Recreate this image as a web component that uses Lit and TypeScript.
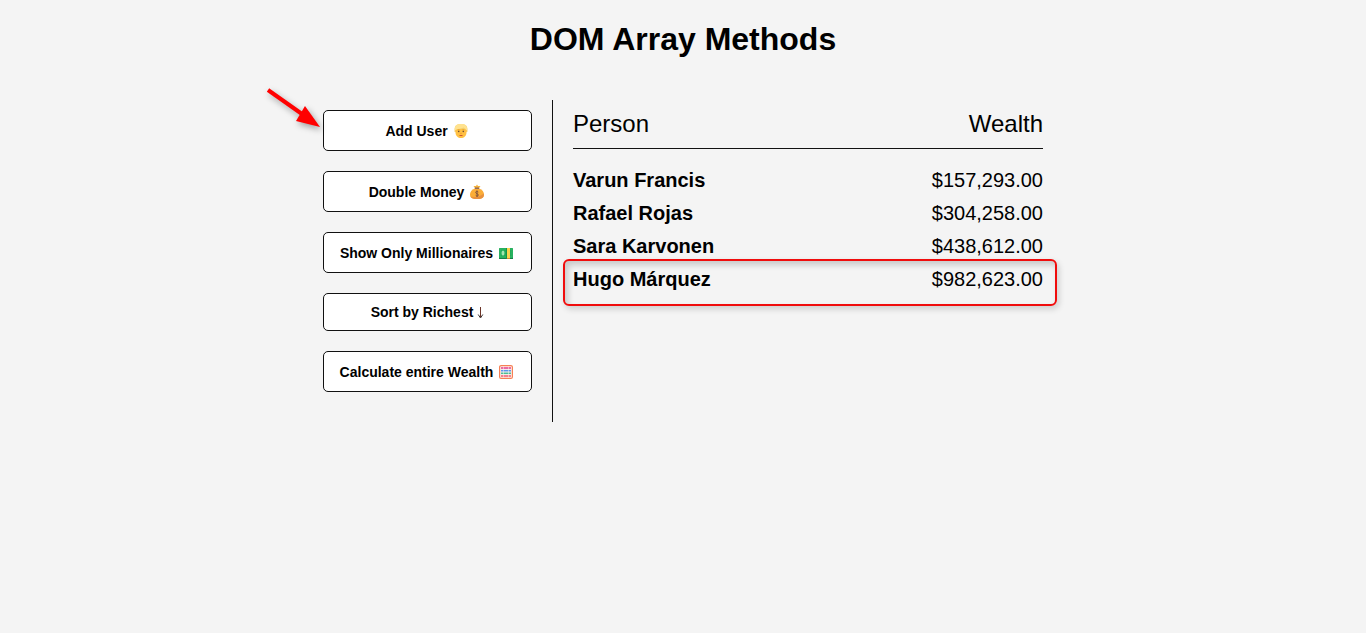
import { LitElement, html, css, svg } from "lit";
import { customElement } from "lit/decorators.js";

interface Person {
  name: string;
  money: number;
  isNew?: boolean;
}

const icons = {
  user: svg`
    <path d="M2.600 9C2 3 4 1 9 1S16 3 15.400 9Z" fill="#f3cf6e"/>
    <path d="M3.500 6H14.500V9.500C14.500 13 12 15 9 15S3.500 13 3.500 9.500Z" fill="#ffc043"/>
    <path d="M3 7C2.500 2 5 1 9 1S15.500 2 15 7L14 7C13.500 5.500 12.500 5 11.500 4.500 9 6 6 5.500 4.500 6.500L4 7Z" fill="#ffe28f"/>
    <path d="M5.800 7h1.800M10.400 7h1.800" stroke="#c98a2c" stroke-width=".7"/>
    <circle cx="6.700" cy="8.500" r=".8" fill="#6a4a35"/><circle cx="11.300" cy="8.500" r=".8" fill="#6a4a35"/>
    <path d="M8.400 10.400h1.200" stroke="#f08f1e" stroke-width=".8"/><path d="M7.500 12.500h3" stroke="#c8492c" stroke-width=".9"/>`,
  money: svg`
    <path d="M7 4 5.500 2 8 2 9 .5 10 2 12.500 2 11 4Z" fill="#f4b13c"/>
    <path d="M7 4.500C3.500 5.500 2 8 2 10.500 2 14 4.500 15 9 15S16 14 16 10.500C16 8 14.500 5.500 11 4.500Z" fill="#fbad38"/>
    <path d="M2.500 12.500C6 13.500 12 13 15.800 9.500V12C15 14.500 12.500 15 9 15S3.500 14.600 2.500 12.500Z" fill="#e8913f"/>
    <path d="M6.800 4.200h4.400" stroke="#78514a" stroke-width="1.200"/>
    <path d="M10.300 8C9 7 7.700 7.200 7.700 8.500S10.300 9.500 10.300 11 8.500 12.200 7.700 11.300M9 6.500v6.500" fill="none" stroke="#80523c" stroke-width="1"/>`,
  cash: svg`
    <rect x="2" y="3" width="14" height="11" rx=".6" fill="#1faa58"/>
    <path d="M2 13h14v1H2Z" fill="#147c49"/>
    <rect x="3" y="4" width="12" height="8" fill="none" stroke="#3fc172" stroke-width=".6"/>
    <ellipse cx="6" cy="8" rx="1.500" ry="2.500" fill="#a2e6af"/>
    <path d="M9 3h4v11H9Z" fill="#14934a"/><path d="M10 3h3v10h-3Z" fill="#f8d34c"/><path d="M10 13h3v1h-3Z" fill="#d88a36"/>`,
  abacus: svg`
    <rect x="2.600" y="1.600" width="12.800" height="12.800" rx="1.500" fill="#fff3ee" stroke="#f68055" stroke-width="1.200"/>
    <path d="M4 4h10" stroke="#ea6aa4" stroke-width="2"/>
    <path d="M4 6.700h10" stroke="#5b97ec" stroke-width="1.600"/>
    <path d="M4 9.300h10" stroke="#4cbd98" stroke-width="1.600"/>
    <path d="M4 12h10" stroke="#f0657a" stroke-width="1.600"/>
    <path d="M6.500 2.500v11M11.500 2.500v11" stroke="#fff3ee" stroke-width=".7" opacity=".7"/>`,
};

const people: Person[] = [
  { name: "Varun Francis", money: 157293 },
  { name: "Rafael Rojas", money: 304258 },
  { name: "Sara Karvonen", money: 438612 },
  { name: "Hugo Márquez", money: 982623, isNew: true },
];

const formatMoney = (value: number) =>
  value.toLocaleString("en-US", { style: "currency", currency: "USD" });

@customElement("app-root")
export class AppRoot extends LitElement {
  static styles = css`
    :host {
      display: block;
      min-height: 100vh;
      box-sizing: border-box;
      padding: 20px;
      background: #f4f4f4;
      color: #000;
      font-family: Arial, "Liberation Sans", sans-serif;
    }
    * { box-sizing: border-box; }
    h1 {
      margin: 0 0 42px;
      font-size: 32px;
      line-height: 38px;
      text-align: center;
    }
    .layout {
      display: flex;
      max-width: 720px;
      margin: 0 auto;
    }
    .actions {
      flex: 0 0 230px;
      display: flex;
      flex-direction: column;
      gap: 20px;
      padding: 10px 20px 30px 0;
      border-right: 1px solid #111;
    }
    .action {
      position: relative;
      display: flex;
      align-items: center;
      justify-content: center;
      gap: 4px;
      padding: 10px 0 9px;
      border: 1px solid #111;
      border-radius: 5px;
      background: #fff;
      color: #000;
      font: bold 14px/20px Arial, "Liberation Sans", sans-serif;
      white-space: nowrap;
      cursor: pointer;
    }
    .compact { padding: 10px 0; line-height: 16px; }
    .icon { display: block; width: 18px; height: 16px; }
    .down { display: block; width: 7px; height: 14px; }
    .pointer {
      position: absolute;
      right: 100%;
      bottom: 18px;
      width: 60px;
      height: 48px;
      overflow: visible;
      filter: drop-shadow(2px 3px 3px rgba(0, 0, 0, 0.35));
      pointer-events: none;
    }
    main { flex: 1; padding: 10px 0 0 20px; }
    table { width: 100%; border-collapse: collapse; }
    th, td { padding: 5px 0; font-size: 20px; line-height: 23px; text-align: left; }
    td, .amount { text-align: right; }
    thead th {
      padding: 0 0 10px;
      border-bottom: 1px solid #111;
      font-size: 24px;
      font-weight: normal;
      line-height: 28px;
    }
    tbody::before { content: ""; display: table-row; height: 15px; }
    .new { position: relative; }
    .highlight {
      position: absolute;
      inset: -4px -14px -10px -10px;
      border: 2px solid #f00c0c;
      border-radius: 6px;
      box-shadow: 2px 3px 6px rgba(0, 0, 0, 0.16), inset 3px 4px 6px rgba(0, 0, 0, 0.18);
      pointer-events: none;
    }
  `;

  private icon(name: keyof typeof icons) {
    return html`<svg class="icon" viewBox="0 0 18 16" aria-hidden="true">${icons[name]}</svg>`;
  }

  render() {
    return html`
      <h1>DOM Array Methods</h1>
      <div class="layout">
        <aside class="actions">
          <button class="action" type="button">
            Add User ${this.icon("user")}
            <svg class="pointer" viewBox="0 0 60 48" aria-hidden="true">
              <path d="M4 6 38 30" stroke="#f00" stroke-width="4"/>
              <path d="M56 43 41 22 38 27 32 37Z" fill="#f00"/>
            </svg>
          </button>
          <button class="action" type="button">Double Money ${this.icon("money")}</button>
          <button class="action" type="button">Show Only Millionaires ${this.icon("cash")}</button>
          <button class="action compact" type="button">
            Sort by Richest
            <svg class="down" viewBox="0 0 7 14" aria-hidden="true">
              <path d="M3.500 2v10" stroke="#6c3428" stroke-width="1"/>
              <path d="M1.200 9.500 3.500 13 5.800 9.500" fill="none" stroke="#3b3434" stroke-width="1"/>
            </svg>
          </button>
          <button class="action" type="button">Calculate entire Wealth ${this.icon("abacus")}</button>
        </aside>
        <main>
          <table>
            <thead>
              <tr><th scope="col">Person</th><th scope="col" class="amount">Wealth</th></tr>
            </thead>
            <tbody>
              ${people.map(
                (p) => html`<tr class=${p.isNew ? "new" : ""}>
                  <th scope="row">${p.name}${p.isNew ? html`<span class="highlight"></span>` : ""}</th>
                  <td>${formatMoney(p.money)}</td>
                </tr>`
              )}
            </tbody>
          </table>
        </main>
      </div>
    `;
  }
}
